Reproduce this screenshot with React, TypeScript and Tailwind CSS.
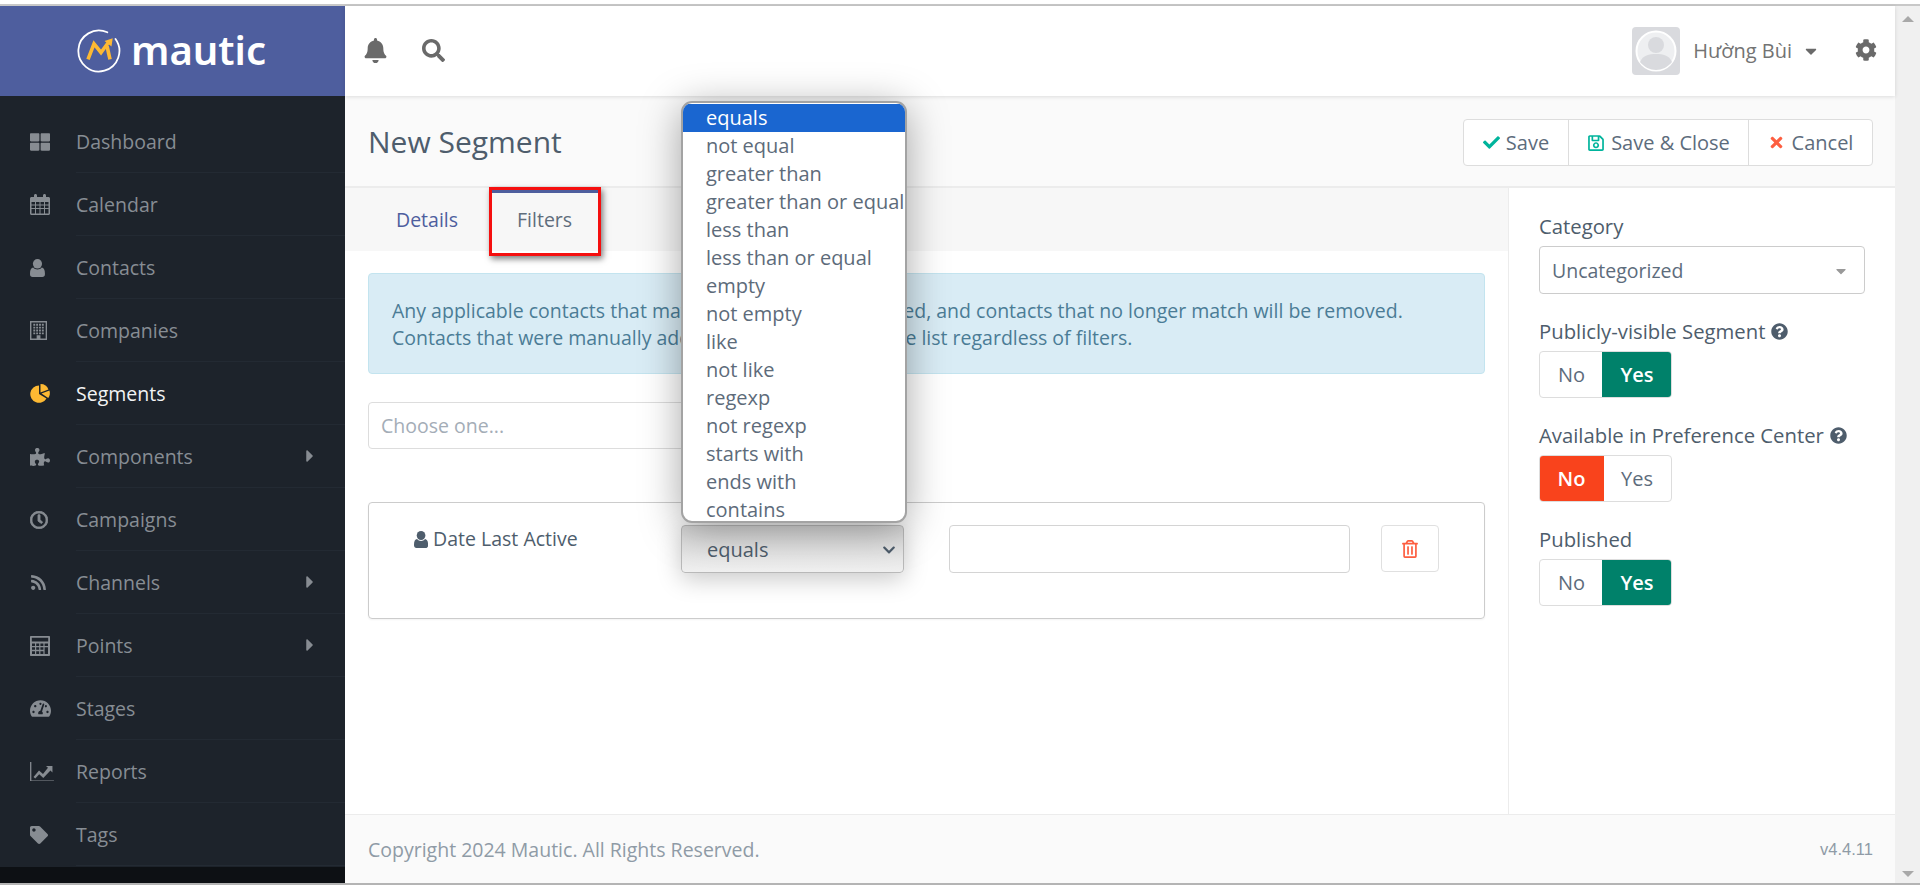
import React from 'react'
import {
    FaBell, FaSearch, FaCog, FaCheck, FaRegSave, FaTimes, FaRegTrashAlt, FaQuestionCircle,
    FaThLarge, FaPuzzlePiece, FaRegClock, FaRss,
    FaTachometerAlt, FaTag, FaCaretRight, FaCaretDown, FaChevronDown,
} from 'react-icons/fa';

type IconProps = { size?: number; className?: string };

const UserIcon = ({ size = 18, className }: IconProps) => (
    <svg width={size * 0.83} height={size} viewBox="0 0 15 18" fill="currentColor" className={className}>
        <ellipse cx="7.5" cy="4.8" rx="4.6" ry="4.8" />
        <path d="M3.2 8.6C4.3 10 5.8 10.6 7.5 10.6s3.2-.6 4.3-2c2 .4 3.2 2.2 3.2 6v.6c0 1.7-1 2.8-2.6 2.8H2.6C1 18 0 16.900 0 15.200v-.6c0-3.800 1.200-5.600 3.200-6Z" />
    </svg>
);

const CalendarIcon = ({ size = 20, className }: IconProps) => (
    <svg width={size} height={size * 1.05} viewBox="0 0 20 21" fill="currentColor" className={className}>
        <path fillRule="evenodd" d="M1.500 3H4V1.500C4 .7 4.600 0 5.500 0S7 .7 7 1.500V3h6V1.500C13 .7 13.600 0 14.500 0S16 .7 16 1.500V3h2.500C19.300 3 20 3.700 20 4.500v15c0 .8-.7 1.500-1.500 1.500h-17C.7 21 0 20.300 0 19.500v-15C0 3.700.7 3 1.500 3ZM1.500 8v2.500h3.500V8Zm4.500 0v2.500h3.500V8Zm4.500 0v2.500H14V8ZM15 8v2.500h3.500V8ZM1.500 11.500V14h3.500v-2.500Zm4.500 0V14h3.500v-2.500Zm4.500 0V14H14v-2.500Zm4.500 0V14h3.500v-2.500ZM1.500 15v4.500h3.500V15ZM6 15v4.500h3.500V15Zm4.500 0v4.500H14V15Zm4.500 0v4.500h3.500V15Z" />
    </svg>
);

const BuildingIcon = ({ size = 19, className }: IconProps) => (
    <svg width={size * 0.9} height={size} viewBox="0 0 18 20" fill="currentColor" className={className}>
        <path fillRule="evenodd" d="M0 0h18v20H0Zm1.500 1.500v17H7V15h4v3.500h5.500v-17Z" />
        <path d="M3.500 3h2v2h-2Zm3 0h2v2h-2Zm3 0h2v2h-2Zm3 0h2v2h-2Zm-9 3h2v2h-2Zm3 0h2v2h-2Zm3 0h2v2h-2Zm3 0h2v2h-2Zm-9 3h2v2h-2Zm3 0h2v2h-2Zm3 0h2v2h-2Zm3 0h2v2h-2Zm-9 3h2v2h-2Zm3 0h2v2h-2Zm3 0h2v2h-2Zm3 0h2v2h-2Z" />
    </svg>
);

const CalculatorIcon = ({ size = 20, className }: IconProps) => (
    <svg width={size} height={size} viewBox="0 0 20 20" fill="currentColor" className={className}>
        <path fillRule="evenodd" d="M1 0h18c.6 0 1 .4 1 1v18c0 .6-.4 1-1 1H1c-.6 0-1-.4-1-1V1c0-.6.4-1 1-1Zm.8 1.800v3.700h16.400V1.800ZM2 7.500V10h3V7.500Zm4.200 0V10h3V7.500Zm4.200 0V10h3V7.500Zm4.200 0V10h3.400V7.500ZM2 11.300v2.500h3v-2.500Zm4.200 0v2.500h3v-2.500Zm4.200 0v2.500h3v-2.500Zm4.200 0V18h3.400v-6.700ZM2 15.200V18h3v-2.800Zm4.200 0V18h3v-2.800Zm4.200 0V18h3v-2.800Z" />
    </svg>
);

const ReportsIcon = ({ size = 24, className }: IconProps) => (
    <svg width={size} height={size * 0.83} viewBox="0 0 24 20" fill="currentColor" className={className}>
        <path d="M0 0h1.300v18.700H24V20H0Z" />
        <path d="M3.500 15 9 8.500l4 3.500 5-6.200L16 4h6.500v6.500L20.500 8.500 13.300 16 9.200 12.300 5.200 16.500Z" />
    </svg>
);

const PieIcon = ({ size = 21, className }: IconProps) => (
    <svg width={size} height={size * 0.9} viewBox="0 0 21 19" fill="currentColor" className={className}>
        <path d="M9 1.500A8.700 8.700 0 1 0 16.500 14.500L9 10Z" />
        <path d="M10.500 0a8.500 8.500 0 0 1 8 5.500L10.500 8.500Z" />
        <path d="M11.500 9.500 19.500 6.500A8.500 8.500 0 0 1 18.300 14Z" />
    </svg>
);

const navItems = [
    { label: 'Dashboard', icon: <FaThLarge size={20} /> },
    { label: 'Calendar', icon: <CalendarIcon size={20} /> },
    { label: 'Contacts', icon: <UserIcon size={18} /> },
    { label: 'Companies', icon: <BuildingIcon size={19} /> },
    { label: 'Segments', icon: <PieIcon size={21} />, active: true },
    { label: 'Components', icon: <FaPuzzlePiece size={20} />, arrow: true },
    { label: 'Campaigns', icon: <FaRegClock size={18} stroke="currentColor" strokeWidth={25} /> },
    { label: 'Channels', icon: <FaRss size={17} />, arrow: true },
    { label: 'Points', icon: <CalculatorIcon size={20} />, arrow: true },
    { label: 'Stages', icon: <FaTachometerAlt size={21} /> },
    { label: 'Reports', icon: <ReportsIcon size={24} /> },
    { label: 'Tags', icon: <FaTag size={18} /> },
];

const operators = [
    'equals', 'not equal', 'greater than', 'greater than or equal', 'less than', 'less than or equal', 'empty',
    'not empty', 'like', 'not like', 'regexp', 'not regexp', 'starts with', 'ends with', 'contains',
];

const Logo = () => (
    <svg width="44" height="44" viewBox="0 0 44 44" className="shrink-0">
        <path d="M30.300 3.300A20.500 20.500 0 1 0 38.500 10" fill="none" stroke="#fff" strokeWidth="1.800" strokeLinecap="round" />
        <path d="M11 30.300 17 14.800 24 23.500 31 14" fill="none" stroke="#fdb933" strokeWidth="3.600" />
        <path d="M27.500 12 35.700 9.300 34.500 17.500Z" fill="#fdb933" />
        <path d="M30 17 33 30.300" fill="none" stroke="#fdb933" strokeWidth="3.600" />
    </svg>
);

const Toggle = ({ value, split }: { value: 'yes' | 'no'; split: number }) => (
    <div className="flex w-[133px] h-[47px] rounded-[4px] overflow-hidden border border-[#ddd] text-[20px]">
        <span
            style={{ width: split }}
            className={`flex items-center justify-center ${value === 'no' ? 'bg-[#f9431c] text-white font-semibold -m-px' : 'text-[#5d6c7c]'}`}
        >
            No
        </span>
        <span className={`flex flex-1 items-center justify-center ${value === 'yes' ? 'bg-[#00816a] text-white font-semibold -m-px' : 'text-[#5d6c7c]'}`}>
            Yes
        </span>
    </div>
);

export default function App() {
    return (
        <div className="w-[1920px] h-[885px] flex flex-col overflow-hidden bg-white font-['Open_Sans',sans-serif] text-[19.5px] text-[#4e5d6c]">
            <div className="h-1 shrink-0 bg-white"></div>
            <div className="h-[2px] shrink-0 bg-[#c8c8c8]"></div>

            <div className="flex flex-1 min-h-0">
                {/* sidebar */}
                <aside className="w-[345px] shrink-0 flex flex-col bg-[#1d232b]">
                    <div className="h-[90px] shrink-0 flex items-center pl-[77px] gap-[10px] bg-[#4e5e9e]">
                        <Logo />
                        <span className="text-white text-[40px] font-semibold leading-none -mt-[3px] font-['Noto_Sans',sans-serif]">mautic</span>
                    </div>
                    <nav className="flex-1 pt-[14px]">
                        {navItems.map((item) => (
                            <div key={item.label} className="flex h-[63px] items-center">
                                <span className={`w-[76px] pl-[30px] shrink-0 ${item.active ? 'text-[#fdb933]' : 'text-[#878c92]'}`}>
                                    {item.icon}
                                </span>
                                <div className={`flex flex-1 h-full items-center pr-[25px] border-b border-[#232a33] ${item.active ? 'text-[#f2f3f4]' : 'text-[#878d94]'}`}>
                                    <span className="flex-1 pt-[1px]">{item.label}</span>
                                    {item.arrow && <FaCaretRight size={20} className="text-[#878c92]" />}
                                </div>
                            </div>
                        ))}
                    </nav>
                    <div className="h-4 shrink-0 bg-[#0d1014]"></div>
                </aside>

                {/* content */}
                <main className="flex-1 min-w-0 flex flex-col">
                    <header className="h-[90px] shrink-0 flex items-center pl-[18px] pr-[18px] bg-white shadow-[0_1px_4px_rgba(0,0,0,0.12)] relative z-10 text-[#6a6a6a]">
                        <FaBell size={25} className="-mt-[2px]" />
                        <FaSearch size={23} className="ml-[34px] -mt-[2px]" />
                        <div className="flex-1"></div>
                        <div className="w-12 h-12 rounded-[4px] bg-[#d9dade] flex items-center justify-center">
                            <svg width="44" height="44" viewBox="0 0 44 44">
                                <circle cx="22" cy="22" r="19.500" fill="#eeeff1" stroke="#fff" strokeWidth="2" />
                                <circle cx="22" cy="16" r="8" fill="#d9dade" />
                                <path d="M6 33c3-7 9-8 16-8s13 1 16 8c-4 5-10 8-16 8S10 38 6 33Z" fill="#d9dade" />
                            </svg>
                        </div>
                        <span className="ml-[13px] text-[20px] text-[#737373]">Hường Bùi</span>
                        <FaCaretDown size={18} className="ml-[10px]" />
                        <FaCog size={22} className="ml-[35px] -mt-[2px]" />
                    </header>

                    <div className="h-[92px] shrink-0 flex items-center pt-[2px] pl-[23px] pr-[22px] bg-[#fafafa] border-b-2 border-[#ececec]">
                        <h1 className="flex-1 text-[30px] leading-none">New Segment</h1>
                        <div className="flex h-[47px] rounded-[4px] border border-[#ddd] bg-white text-[20px] text-[#5d6c7c]">
                            <span className="w-[105px] flex items-center justify-center gap-[6px] border-r border-[#ddd] pt-[1px]">
                                <FaCheck size={17} className="text-[#00b49c]" /> Save
                            </span>
                            <span className="w-[180px] flex items-center justify-center gap-[6px] border-r border-[#ddd] pt-[1px]">
                                <FaRegSave size={18} className="text-[#00b49c]" /> Save &amp; Close
                            </span>
                            <span className="w-[123px] flex items-center justify-center gap-[7px] pt-[1px]">
                                <FaTimes size={17} className="text-[#fd5e40]" /> Cancel
                            </span>
                        </div>
                    </div>

                    <div className="flex-1 min-h-0 flex">
                        <section className="w-[1164px] shrink-0 border-r border-[#ececec]">
                            <div className="relative flex h-[63px] bg-[#f7f7f7] pl-[34px]">
                                <span className="flex items-center px-[17px] text-[#4e5e9e]">Details</span>
                                <span className="flex items-center ml-[16px] px-[26px] text-[#5f6d7c] border-t-[5px] border-[#4e5e9e] pb-[5px]">Filters</span>
                                <div className="absolute left-[144px] -top-[1px] w-[112px] h-[69px] border-[3px] border-[#f50f0f] shadow-[2px_3px_6px_rgba(0,0,0,0.5)]"></div>
                            </div>

                            <div className="px-[23px] pt-[22px]">
                                <div className="h-[101px] rounded-[4px] border border-[#c3e4ef] bg-[#d9ecf5] px-[23px] pt-[23px] leading-[27px] text-[#4b7c96] whitespace-nowrap">
                                    Any applicable contacts that match the filters will be added, and contacts that no longer match will be removed.<br />
                                    Contacts that were manually added to it will remain in the list regardless of filters.
                                </div>

                                <div className="mt-[28px] w-[340px] h-[47px] rounded-[4px] border border-[#ddd] flex items-center px-3 text-[#a4adb7]">Choose one...</div>

                                <div className="mt-[53px] h-[117px] rounded-[4px] border border-[#ccc] shadow-[0_1px_2px_rgba(0,0,0,0.05)] flex items-start pt-[22px]">
                                    <div className="w-[312px] pl-[45px] h-[28px] flex items-center gap-[5px]">
                                        <UserIcon size={17} />
                                        <span>Date Last Active</span>
                                    </div>
                                    <div className="relative w-[223px] h-[48px]">
                                        <div className="h-[48px] rounded-[4px] border border-[#b9b9b9] bg-gradient-to-b from-[#d6d6d6] to-[#f0f0f0] shadow-[0_6px_24px_rgba(0,0,0,0.22)] flex items-center pl-[25px] pr-[7px] pt-[1px] text-[20px]">
                                            <span className="flex-1">equals</span>
                                            <FaChevronDown size={14} />
                                        </div>
                                        <ul className="absolute left-0 bottom-[50px] w-[226px] h-[422px] pt-[1px] overflow-hidden rounded-[11px] border-2 border-[#a3a3a3] bg-white shadow-[0_6px_40px_rgba(0,0,0,0.35)] z-20 text-[20px] text-[#5d6b7a]">
                                            {operators.map((op, i) => (
                                                <li key={op} className={`h-[28px] leading-[28px] pl-[23px] whitespace-nowrap ${i === 0 ? 'bg-[#1a66d0] text-white' : ''}`}>
                                                    {op}
                                                </li>
                                            ))}
                                        </ul>
                                    </div>
                                    <div className="ml-[45px] w-[401px] h-[48px] rounded-[4px] border border-[#d4d4d4]"></div>
                                    <div className="ml-[31px] w-[58px] h-[47px] rounded-[4px] border border-[#e0e0e0] flex items-center justify-center">
                                        <FaRegTrashAlt size={18} className="text-[#fd5e40]" />
                                    </div>
                                </div>
                            </div>
                        </section>

                        <section className="flex-1 pl-[30px] pr-[30px] pt-[26px]">
                            <label className="block font-medium leading-[24px] mb-[8px] text-[20.3px]">Category</label>
                            <div className="h-[48px] rounded-[4px] border border-[#ccc] flex items-center pl-3 pr-[15px] pt-[1px] text-[#5d6c7c]">
                                <span className="flex-1">Uncategorized</span>
                                <FaCaretDown size={16} className="text-[#999]" />
                            </div>

                            <label className="flex items-center gap-[6px] font-medium text-[20.3px] leading-[24px] mt-[25px] mb-[8px] whitespace-nowrap">Publicly-visible Segment <FaQuestionCircle size={17} /></label>
                            <Toggle value="yes" split={63} />

                            <label className="flex items-center gap-[6px] font-medium text-[20.3px] leading-[24px] mt-[25px] mb-[8px] whitespace-nowrap">Available in Preference Center <FaQuestionCircle size={17} /></label>
                            <Toggle value="no" split={65} />

                            <label className="block font-medium text-[20.3px] leading-[24px] mt-[25px] mb-[8px]">Published</label>
                            <Toggle value="yes" split={63} />
                        </section>
                    </div>

                    <footer className="h-[69px] shrink-0 flex items-center justify-between pl-[23px] pr-[22px] bg-[#fafafa] border-t border-[#ececec] text-[#8f9ba6]">
                        <span className="pt-[2px]">Copyright 2024 Mautic. All Rights Reserved.</span>
                        <span className="text-[16.5px] font-['Liberation_Sans',sans-serif]">v4.4.11</span>
                    </footer>
                </main>

                {/* scrollbar */}
                <div className="w-[25px] shrink-0 flex flex-col items-center justify-between bg-[#f0f0f0] pt-[10px] pb-[6px]">
                    <span className="w-0 h-0 border-x-[6px] border-x-transparent border-b-[6px] border-b-[#a8a8a8]"></span>
                    <span className="w-0 h-0 border-x-[6px] border-x-transparent border-t-[6px] border-t-[#a8a8a8]"></span>
                </div>
            </div>

            <div className="h-[2px] shrink-0 bg-[#b4b4b4]"></div>
        </div>
    )
}
